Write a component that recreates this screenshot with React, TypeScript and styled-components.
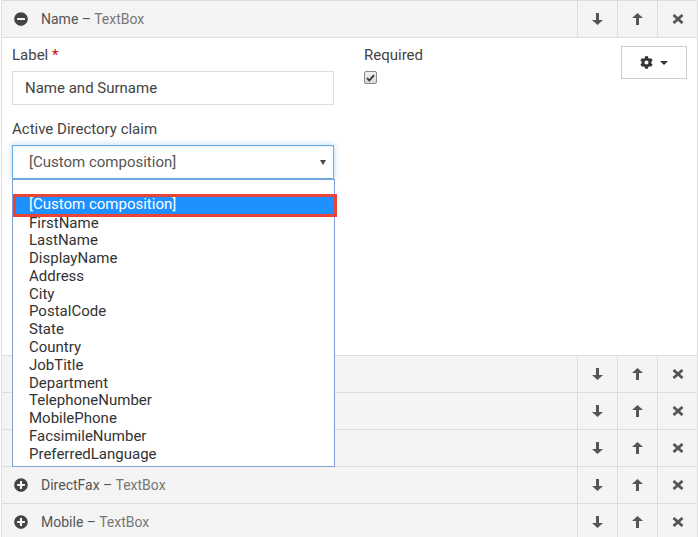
import React from 'react';
import styled, { createGlobalStyle } from 'styled-components';
import { FaCog, FaMinusCircle, FaPlusCircle } from 'react-icons/fa';

const claims = [
  'FirstName',
  'LastName',
  'DisplayName',
  'Address',
  'City',
  'PostalCode',
  'State',
  'Country',
  'JobTitle',
  'Department',
  'TelephoneNumber',
  'MobilePhone',
  'FacsimileNumber',
  'PreferredLanguage',
];

const collapsed = [
  { name: 'Email', kind: 'TextBox' },
  { name: 'Phone', kind: 'TextBox' },
  { name: 'Company', kind: 'TextBox' },
  { name: 'DirectFax', kind: 'TextBox' },
  { name: 'Mobile', kind: 'TextBox' },
];

const ArrowDown = () => (
  <svg width="11" height="12" viewBox="0 0 11 12">
    <path d="M4 0h3v7h4l-5.5 5L0 7h4z" fill="currentColor" />
  </svg>
);

const ArrowUp = () => (
  <svg width="11" height="12" viewBox="0 0 11 12">
    <path d="M4 12h3V5h4L5.5 0 0 5h4z" fill="currentColor" />
  </svg>
);

const Cross = () => (
  <svg width="12" height="10" viewBox="0 0 12 10">
    <path d="M1.5 1l9 8M10.5 1l-9 8" stroke="currentColor" strokeWidth="2.8" />
  </svg>
);

function Tools() {
  return (
    <>
      <ToolButton><ArrowDown /></ToolButton>
      <ToolButton><ArrowUp /></ToolButton>
      <ToolButton><Cross /></ToolButton>
    </>
  );
}

export default function App() {
  return (
    <>
      <GlobalStyle />
      <Fields>
        <Header>
          <Title>
            <FaMinusCircle size={14} color="#444" />
            <span>Name – <Kind>TextBox</Kind></span>
          </Title>
          <Tools />
        </Header>
        <Body>
          <LeftColumn>
            <FieldLabel>Label <Star>*</Star></FieldLabel>
            <TextInput>Name and Surname</TextInput>
            <FieldLabel $spaced>Active Directory claim</FieldLabel>
            <SelectWrap>
              <SelectBox>
                [Custom composition]
                <SelectArrow />
              </SelectBox>
              <Dropdown>
                <Option $selected>[Custom composition]</Option>
                {claims.map((c) => (
                  <Option key={c}>{c}</Option>
                ))}
                <Marker />
              </Dropdown>
            </SelectWrap>
          </LeftColumn>
          <RightColumn>
            <FieldLabel>Required</FieldLabel>
            <Check>
              <svg width="9" height="8" viewBox="0 0 9 8">
                <path d="M1 4.2l2.3 2.3L8 1.2" stroke="#333" strokeWidth="1.8" fill="none" />
              </svg>
            </Check>
          </RightColumn>
          <GearButton>
            <FaCog size={13} color="#333" />
            <Caret />
          </GearButton>
        </Body>
        {collapsed.map((f) => (
          <Header key={f.name}>
            <Title>
              <FaPlusCircle size={14} color="#444" />
              <span>{f.name} – <Kind>{f.kind}</Kind></span>
            </Title>
            <Tools />
          </Header>
        ))}
      </Fields>
    </>
  );
}

const GlobalStyle = createGlobalStyle`
  html, body {
    margin: 0;
    padding: 0;
    background: #fff;
    overflow: hidden;
  }
  body {
    font-family: Roboto, "Liberation Sans", sans-serif;
    font-size: 15px;
    color: #444;
  }
  * { box-sizing: border-box; }
`;

const Fields = styled.div`
  margin-left: 1px;
  width: 697px;
  border: 1px solid #ddd;
  border-bottom: 0;
`;

const Header = styled.div`
  display: flex;
  align-items: stretch;
  height: 37px;
  background: #f4f4f4;
  border-bottom: 1px solid #ddd;
`;

const Title = styled.div`
  flex: 1;
  display: flex;
  align-items: center;
  gap: 13px;
  padding-left: 12px;
  color: #555;
  font-size: 14px;
`;

const Kind = styled.span`
  color: #777;
`;

const ToolButton = styled.button`
  width: 40px;
  padding: 0;
  border: 0;
  border-left: 1px solid #ddd;
  background: transparent;
  color: #555;
  display: flex;
  align-items: center;
  justify-content: center;
`;

const Body = styled.div`
  height: 318px;
  display: flex;
  align-items: flex-start;
  padding: 7px 10px 0 10px;
  background: #fff;
  border-bottom: 1px solid #ddd;
`;

const LeftColumn = styled.div`
  width: 322px;
`;

const RightColumn = styled.div`
  flex: 1;
  margin-left: 30px;
`;

const FieldLabel = styled.div<{ $spaced?: boolean }>`
  line-height: 20px;
  margin-top: ${(p) => (p.$spaced ? '14px' : '0')};
  margin-bottom: 6px;
  color: #444;
`;

const Star = styled.span`
  color: #d0021b;
`;

const TextInput = styled.div`
  height: 34px;
  display: flex;
  align-items: center;
  padding: 0 12px;
  border: 1px solid #ddd;
  color: #444;
`;

const SelectWrap = styled.div`
  position: relative;
`;

const SelectBox = styled.div`
  height: 34px;
  display: flex;
  align-items: center;
  padding-left: 16px;
  border: 1px solid #66afe9;
  box-shadow: inset 0 1px 1px rgba(0, 0, 0, 0.075), 0 0 6px rgba(102, 175, 233, 0.5);
  color: #555;
  position: relative;
`;

const SelectArrow = styled.span`
  position: absolute;
  right: 7px;
  top: 14px;
  border-top: 5px solid #444;
  border-left: 3px solid transparent;
  border-right: 3px solid transparent;
`;

const Dropdown = styled.div`
  position: absolute;
  top: 100%;
  left: 0;
  width: 323px;
  padding: 16px 0 2px;
  background: #fff;
  border: 1px solid #7f9fd6;
  z-index: 2;
`;

const Option = styled.div<{ $selected?: boolean }>`
  height: ${(p) => (p.$selected ? '18.5px' : '17.8px')};
  line-height: ${(p) => (p.$selected ? '17.5px' : '17.8px')};
  padding-left: 16px;
  color: ${(p) => (p.$selected ? '#fff' : '#333')};
  background: ${(p) => (p.$selected ? '#1e90ff' : 'transparent')};
  white-space: nowrap;
`;

const Marker = styled.div`
  position: absolute;
  top: 14px;
  left: 0;
  width: 324px;
  height: 23px;
  border: 3px solid #e8443a;
  pointer-events: none;
`;

const Check = styled.span`
  display: flex;
  align-items: center;
  justify-content: center;
  width: 13px;
  height: 13px;
  margin-top: 3px;
  border: 1px solid #8a8a8a;
  border-radius: 2px;
  background: linear-gradient(#f0f0f0, #d8d8d8);
`;

const GearButton = styled.button`
  width: 66px;
  height: 33px;
  margin-top: 1px;
  display: flex;
  align-items: center;
  justify-content: center;
  gap: 7px;
  padding: 0;
  background: #fff;
  border: 1px solid #ccc;
  border-radius: 0;
`;

const Caret = styled.span`
  border-top: 4px solid #333;
  border-left: 4px solid transparent;
  border-right: 4px solid transparent;
`;
